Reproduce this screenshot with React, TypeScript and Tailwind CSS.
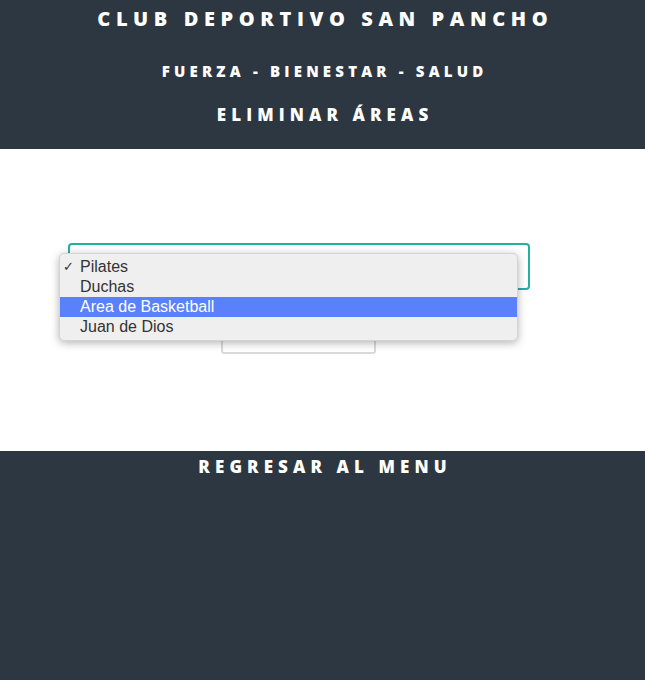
import React from 'react';

const options = ['Pilates', 'Duchas', 'Area de Basketball', 'Juan de Dios'];

export default function App() {
  const selected = 0;
  const highlighted = 2;

  return (
    <div className="min-h-[680px] flex flex-col bg-[#2d3741] font-['Open_Sans',sans-serif] text-white">
      {/* Header */}
      <header className="h-[149px] flex flex-col items-center bg-[#2d3741] font-extrabold uppercase">
        <h1 className="text-[20px] leading-[38px] tracking-[0.28em] pl-[0.28em]">Club Deportivo San Pancho</h1>
        <p className="mt-[21px] text-[15px] leading-[24px] tracking-[0.28em] pl-[0.28em]">Fuerza - Bienestar - Salud</p>
        <h2 className="mt-[19px] text-[17px] leading-[26px] tracking-[0.3em] pl-[0.3em]">Eliminar Áreas</h2>
      </header>

      {/* Form */}
      <main className="h-[302px] bg-white relative">
        <div className="w-[597px] flex flex-col items-center pt-[94px]">
          <div className="w-[462px] h-[47px] border-2 border-[#22b0a0] rounded-[4px] bg-white" />
          <button className="mt-[30px] w-[155px] h-[34px] border-2 border-[#d9d9d9] rounded-[3px] bg-white" />
        </div>

        {/* Open select menu */}
        <div className="absolute left-[59px] top-[104px] w-[459px] py-[3px] bg-[#efefef] rounded-[5px] shadow-[0_2px_8px_rgba(0,0,0,0.3)] border border-[#d4d4d4] font-['Liberation_Sans',sans-serif] text-[16px] text-[#333]">
          {options.map((opt, i) => (
            <div
              key={opt}
              className={`relative h-[20px] leading-[19px] pl-[20px] ${i === highlighted ? 'bg-[#5a80fb] text-white' : ''}`}
            >
              {i === selected && <span className="absolute left-[3px] top-0 text-[13px]">✓</span>}
              {opt}
            </div>
          ))}
        </div>
      </main>

      {/* Footer */}
      <footer className="flex-1 flex justify-center font-extrabold uppercase">
        <span className="pt-[4px] text-[17px] leading-[24px] tracking-[0.3em] pl-[0.3em]">Regresar al Menu</span>
      </footer>
    </div>
  );
}
